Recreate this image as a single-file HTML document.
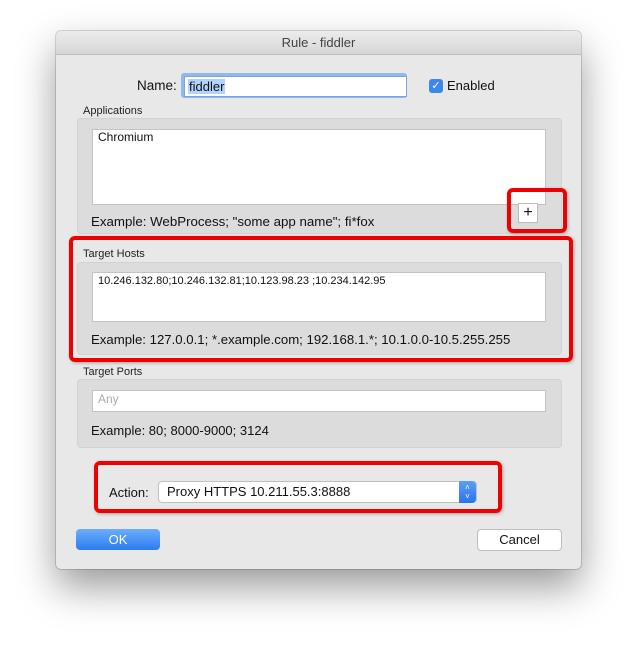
<!DOCTYPE html>
<html><head><style>
body{margin:0;width:637px;height:649px;background:#fff;position:relative;font-family:"Liberation Sans",sans-serif;font-size:13px;color:#111;overflow:hidden}
.a{position:absolute}
.win{left:56px;top:31px;width:525px;height:538px;background:#e8e8e8;border-radius:5px;box-shadow:0 18px 40px rgba(0,0,0,.4),0 0 0 1px rgba(0,0,0,.15)}
.title{left:56px;top:31px;width:525px;height:23px;background:linear-gradient(#ececec,#d6d6d6);border-bottom:1px solid #bdbdbd;border-radius:5px 5px 0 0;text-align:center;line-height:23px;color:#444;font-size:13px}
.grp{background:#dcdcdc;border:1px solid #d2d2d2;border-radius:4px}
.field{background:#fff;border:1px solid #c3c3c3}
.red{border:4px solid #e00;border-radius:6px;box-shadow:1px 1px 3px rgba(0,0,0,.3)}
.lbl{font-size:11px;color:#222}
.btn{background:#fff;border:1px solid #bdbdbd;border-radius:4px;text-align:center;line-height:20px}
</style></head><body>
<div class="a win"></div>
<div class="a title">Rule - fiddler</div>

<div class="a" style="left:137px;top:78px;font-size:13.5px">Name:</div>
<div class="a" style="left:181px;top:73px;width:226px;height:25px;border-radius:3px;background:#93b8ea"></div>
<div class="a field" style="left:184px;top:76px;width:221px;height:19px;border-color:#7aa4dc"></div>
<div class="a" style="left:188px;top:79px;background:#b3d3ff;padding:0 1px">fiddler</div>
<div class="a" style="left:429px;top:79px;width:14px;height:14px;border-radius:3px;background:#3b87f0;color:#fff;font-size:11px;line-height:14px;text-align:center">✓</div>
<div class="a" style="left:447px;top:78px">Enabled</div>

<div class="a lbl" style="left:83px;top:105px">Applications</div>
<div class="a grp" style="left:77px;top:118px;width:483px;height:114px"></div>
<div class="a field" style="left:92px;top:129px;width:452px;height:74px"></div>
<div class="a" style="left:98px;top:130px;font-size:12px">Chromium</div>
<div class="a btn" style="left:518px;top:203px;width:18px;height:18px;border-radius:0;line-height:17px;font-size:16px">+</div>
<div class="a" style="left:91px;top:214px;font-size:13.3px">Example: WebProcess; "some app name"; fi*fox</div>
<div class="a red" style="left:507px;top:188px;width:52px;height:37px"></div>

<div class="a lbl" style="left:83px;top:248px">Target Hosts</div>
<div class="a grp" style="left:77px;top:262px;width:483px;height:91px"></div>
<div class="a field" style="left:92px;top:272px;width:452px;height:48px"></div>
<div class="a" style="left:98px;top:275px;font-size:11px">10.246.132.80;10.246.132.81;10.123.98.23 ;10.234.142.95</div>
<div class="a" style="left:91px;top:332px;font-size:13.2px">Example: 127.0.0.1; *.example.com; 192.168.1.*; 10.1.0.0-10.5.255.255</div>
<div class="a red" style="left:69px;top:236px;width:496px;height:118px"></div>

<div class="a lbl" style="left:83px;top:366px">Target Ports</div>
<div class="a grp" style="left:77px;top:379px;width:483px;height:67px"></div>
<div class="a field" style="left:92px;top:390px;width:452px;height:20px"></div>
<div class="a" style="left:98px;top:392px;color:#aaa;font-size:12px">Any</div>
<div class="a" style="left:91px;top:423px">Example: 80; 8000-9000; 3124</div>

<div class="a red" style="left:94px;top:461px;width:400px;height:44px"></div>
<div class="a" style="left:109px;top:485px">Action:</div>
<div class="a" style="left:158px;top:481px;width:317px;height:20px;background:#fff;border:1px solid #c0c0c0;border-radius:4px"></div>
<div class="a" style="left:167px;top:484px">Proxy HTTPS 10.211.55.3:8888</div>
<div class="a" style="left:459px;top:481px;width:17px;height:22px;background:linear-gradient(#5aa0f8,#2a74ea);border-radius:0 4px 4px 0;color:#fff;font-size:8px;line-height:9px;text-align:center;padding-top:2px;box-sizing:border-box">˄<br>˅</div>

<div class="a" style="left:76px;top:529px;width:84px;height:21px;border-radius:4px;background:linear-gradient(#6aaefc,#2b7cf0);color:#fff;text-align:center;line-height:21px">OK</div>
<div class="a btn" style="left:477px;top:529px;width:83px;height:20px">Cancel</div>
</body></html>
